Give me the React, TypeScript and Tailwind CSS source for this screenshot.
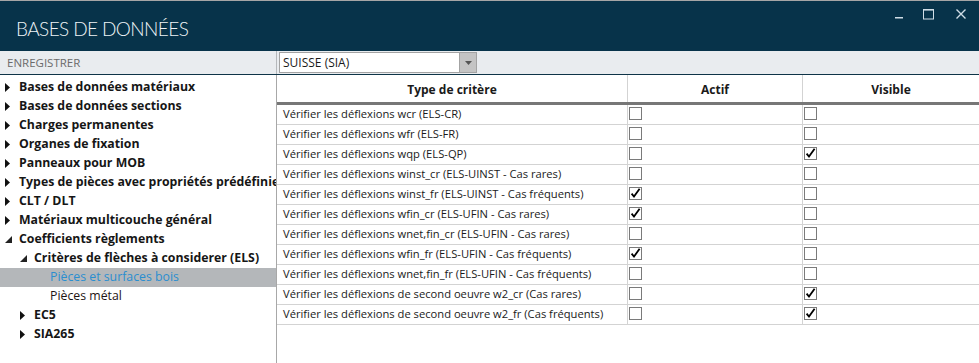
import React from "react";

const rows: [string, boolean, boolean][] = [
  ["Vérifier les déflexions wcr (ELS-CR)", false, false],
  ["Vérifier les déflexions wfr (ELS-FR)", false, false],
  ["Vérifier les déflexions wqp (ELS-QP)", false, true],
  ["Vérifier les déflexions winst_cr (ELS-UINST - Cas rares)", false, false],
  ["Vérifier les déflexions winst_fr (ELS-UINST - Cas fréquents)", true, false],
  ["Vérifier les déflexions wfin_cr (ELS-UFIN - Cas rares)", true, false],
  ["Vérifier les déflexions wnet,fin_cr (ELS-UFIN - Cas rares)", false, false],
  ["Vérifier les déflexions wfin_fr (ELS-UFIN - Cas fréquents)", true, false],
  ["Vérifier les déflexions wnet,fin_fr (ELS-UFIN - Cas fréquents)", false, false],
  ["Vérifier les déflexions de second oeuvre w2_cr (Cas rares)", false, true],
  ["Vérifier les déflexions de second oeuvre w2_fr (Cas fréquents)", false, true],
];

type TreeItem = { label: string; level: number; kind: "closed" | "open" | "leaf"; bold: boolean; selected?: boolean };

const tree: TreeItem[] = [
  { label: "Bases de données matériaux", level: 0, kind: "closed", bold: true },
  { label: "Bases de données sections", level: 0, kind: "closed", bold: true },
  { label: "Charges permanentes", level: 0, kind: "closed", bold: true },
  { label: "Organes de fixation", level: 0, kind: "closed", bold: true },
  { label: "Panneaux pour MOB", level: 0, kind: "closed", bold: true },
  { label: "Types de pièces avec propriétés prédéfinies", level: 0, kind: "closed", bold: true },
  { label: "CLT / DLT", level: 0, kind: "closed", bold: true },
  { label: "Matériaux multicouche général", level: 0, kind: "closed", bold: true },
  { label: "Coefficients règlements", level: 0, kind: "open", bold: true },
  { label: "Critères de flèches à considerer (ELS)", level: 1, kind: "open", bold: true },
  { label: "Pièces et surfaces bois", level: 2, kind: "leaf", bold: false, selected: true },
  { label: "Pièces métal", level: 2, kind: "leaf", bold: false },
  { label: "EC5", level: 1, kind: "closed", bold: true },
  { label: "SIA265", level: 1, kind: "closed", bold: true },
];

function Check({ on }: { on: boolean }) {
  return (
    <div className="w-[13px] h-[13px] border border-[#7a7a7a] bg-white relative">
      {on && (
        <svg width="13" height="13" viewBox="0 0 13 13" className="absolute -left-px -top-px">
          <path d="M2.6 6.6 L5 9.6 L10.6 1.8" stroke="#000" strokeWidth="1.8" fill="none" strokeLinejoin="miter" />
        </svg>
      )}
    </div>
  );
}

function Arrow({ kind }: { kind: TreeItem["kind"] }) {
  if (kind === "closed")
    return (
      <svg width="5" height="9" viewBox="0 0 5 9">
        <polygon points="0,0 5,4.5 0,9" fill="#111" />
      </svg>
    );
  if (kind === "open")
    return (
      <svg width="7" height="7" viewBox="0 0 7 7">
        <polygon points="7,0 7,7 0,7" fill="#222" />
      </svg>
    );
  return <span />;
}

export default function App() {
  const font = { fontFamily: "'Open Sans', 'Noto Sans', sans-serif" };
  return (
    <div className="w-[979px] h-[363px] overflow-hidden bg-white flex flex-col" style={font}>
      <div className="h-px bg-[#a6a6a6]" />
      {/* title bar */}
      <div className="h-[50px] bg-[#07334a] flex justify-between">
        <div
          className="pl-[16px] pt-[16px] text-[19px] font-light text-[#eef3f6] tracking-[-0.6px] leading-[24px] whitespace-nowrap"
          style={{ fontFamily: "Lato, 'Open Sans', sans-serif" }}
        >
          BASES DE DONNÉES
        </div>
        <div className="flex items-start pt-[7px] pr-[12px]">
          <svg width="10" height="12" viewBox="0 0 10 12" className="mt-px mr-[18px]">
            <rect x="1" y="8" width="8" height="1.5" fill="#cfdde6" />
          </svg>
          <svg width="12" height="12" viewBox="0 0 12 12" className="mr-[21px]">
            <rect x="1.5" y="1.5" width="10" height="9.5" fill="none" stroke="#cfdde6" strokeWidth="1" />
            <rect x="1" y="1" width="11" height="1.6" fill="#cfdde6" />
          </svg>
          <svg width="12" height="12" viewBox="0 0 12 12">
            <path d="M1.5 1.5 L10.5 10.5 M10.5 1.5 L1.5 10.5" stroke="#cfdde6" strokeWidth="1.4" />
          </svg>
        </div>
      </div>
      {/* toolbar */}
      <div className="h-[24px] bg-[#e9ecef] border-b border-[#0e3447] flex">
        <div className="w-[277px] border-r border-[#b5b8bb] pl-[7px] flex items-center text-[11.5px] text-[#6b6b6b]">
          ENREGISTRER
        </div>
        <div className="pl-[2px] pt-px">
          <div className="w-[198px] h-[21px] border border-[#a3a3a3] bg-white flex">
            <div className="flex-1 pl-[3px] text-[12px] text-[#1a1a1a] leading-[19px]">SUISSE (SIA)</div>
            <div className="w-[17px] bg-[#c4c4c4] border-l border-[#a3a3a3] flex items-center justify-center">
              <svg width="7" height="4" viewBox="0 0 7 4">
                <polygon points="0,0 7,0 3.5,4" fill="#555" />
              </svg>
            </div>
          </div>
        </div>
      </div>
      {/* body */}
      <div className="flex-1 flex min-h-0">
        <div className="w-[277px] shrink-0 border-r border-[#a8a8a8] pt-[3px] overflow-hidden">
          {tree.map((t, i) => (
            <div
              key={i}
              className={`h-[19px] flex items-center overflow-hidden ${t.selected ? "bg-[#b4b7ba]" : ""}`}
              style={{ paddingLeft: 5 + t.level * 15 }}
            >
              <div className="w-[14px] shrink-0 flex items-center">
                <Arrow kind={t.kind} />
              </div>
              <span
                className={`whitespace-nowrap text-[12.3px] ${t.bold ? "font-bold text-[#161616]" : "text-[#1e1414]"} ${
                  t.selected ? "text-[#2a8ed0]" : ""
                } ${t.kind === "leaf" ? "pl-px" : ""}`}
              >
                {t.label}
              </span>
            </div>
          ))}
        </div>
        <div className="flex-1 min-w-0">
          <div className="grid grid-cols-[351px_175px_176px] h-[27px] text-[12px] font-bold text-[#1a1a1a]">
            <div className="border-r border-[#d3d3d3] flex justify-center pt-[6px]">Type de critère</div>
            <div className="border-r border-[#d3d3d3] flex justify-center pt-[6px]">Actif</div>
            <div className="flex justify-center pt-[6px]">Visible</div>
          </div>
          <div className="h-[3px] bg-[#777777]" />
          {rows.map(([label, a, v], i) => (
            <div key={i} className="grid grid-cols-[351px_175px_176px] h-[20px] border-b border-[#d3d3d3] text-[11.2px] text-[#1a1a1a]">
              <div className="border-r border-[#d3d3d3] pl-[6px] flex items-center whitespace-nowrap overflow-hidden">{label}</div>
              <div className="border-r border-[#d3d3d3] pl-px pt-[2px]">
                <Check on={a} />
              </div>
              <div className="pl-px pt-[2px]">
                <Check on={v} />
              </div>
            </div>
          ))}
        </div>
      </div>
    </div>
  );
}
